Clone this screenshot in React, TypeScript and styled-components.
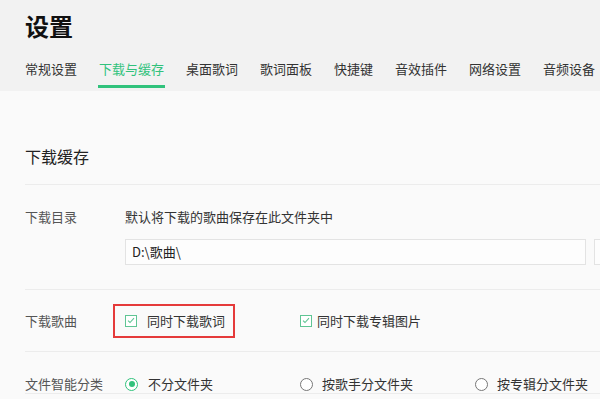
import { createGlobalStyle } from "styled-components";
import styled from "styled-components";

const GlobalStyle = createGlobalStyle`
  html, body {
    margin: 0;
    padding: 0;
    background: #fafafa;
    font-family: "Noto Sans CJK SC", "Liberation Sans", sans-serif;
    overflow: hidden;
  }
`;

const tabs = ["常规设置", "下载与缓存", "桌面歌词", "歌词面板", "快捷键", "音效插件", "网络设置", "音频设备"];

const Page = styled.div`
  width: 600px;
  height: 399px;
  background: #fafafa;
  overflow: hidden;
`;

const Header = styled.header`
  background: #f2f2f2;
  height: 91px;
  padding-left: 25px;
  box-sizing: border-box;
  display: flex;
  flex-direction: column;
`;

const Title = styled.h1`
  margin: 12px 0 0;
  font-size: 24px;
  line-height: 28px;
  font-weight: 700;
  color: #111;
`;

const TabBar = styled.nav`
  display: flex;
  gap: 22px;
  margin-top: 20px;
  white-space: nowrap;
`;

const Tab = styled.div<{ $active?: boolean }>`
  position: relative;
  font-size: 13px;
  line-height: 18px;
  color: ${(p) => (p.$active ? "#31c27c" : "#333")};
  height: 28px;
  &::after {
    content: "";
    display: ${(p) => (p.$active ? "block" : "none")};
    position: absolute;
    left: -1px;
    right: -1px;
    bottom: 0;
    height: 3px;
    background: #31c27c;
  }
`;

const Content = styled.main`
  padding-left: 25px;
`;

const SectionTitle = styled.h2`
  margin: 0;
  padding: 55px 0 18px;
  font-size: 16px;
  line-height: 20px;
  font-weight: 400;
  color: #222;
  border-bottom: 1px solid #ececec;
`;

const Row = styled.div<{ $pad?: string; $center?: boolean }>`
  display: flex;
  align-items: ${(p) => (p.$center ? "center" : "flex-start")};
  padding: ${(p) => p.$pad ?? "0"};
  min-height: ${(p) => (p.$center ? "62px" : "auto")};
  border-bottom: 1px solid #ececec;
  box-sizing: border-box;
`;

const Label = styled.div`
  width: 100px;
  flex-shrink: 0;
  font-size: 13px;
  line-height: 18px;
  color: #555;
`;

const Body = styled.div`
  flex: 1;
  font-size: 13px;
  line-height: 18px;
  color: #333;
`;

const PathRow = styled.div`
  display: flex;
  gap: 8px;
  margin-top: 13px;
`;

const Input = styled.div<{ $w: number }>`
  width: ${(p) => p.$w}px;
  flex-shrink: 0;
  height: 26px;
  box-sizing: border-box;
  border: 1px solid #e3e3e3;
  background: #fdfdfd;
  padding-left: 6px;
  font-size: 13px;
  line-height: 24px;
  color: #222;
`;

const Options = styled.div`
  display: flex;
`;

const Option = styled.label`
  width: 175px;
  display: flex;
  align-items: center;
  font-size: 13px;
  line-height: 18px;
  color: #333;
  white-space: nowrap;
`;

const Highlight = styled.span`
  position: relative;
  display: flex;
  align-items: center;
  &::after {
    content: "";
    position: absolute;
    left: -12px;
    right: -10px;
    top: -8px;
    bottom: -8px;
    border: 2px solid #e53a3a;
  }
`;

const Box = styled.span<{ $gap: number }>`
  width: 12px;
  height: 12px;
  box-sizing: border-box;
  border: 1px solid #5fc594;
  margin-right: ${(p) => p.$gap}px;
  display: flex;
  align-items: center;
  justify-content: center;
  background: #fff;
`;

const Radio = styled.span<{ $on?: boolean; $gap: number }>`
  width: 13px;
  height: 13px;
  box-sizing: border-box;
  border-radius: 50%;
  border: 1px solid ${(p) => (p.$on ? "#31c27c" : "#777")};
  margin-right: ${(p) => p.$gap}px;
  display: flex;
  align-items: center;
  justify-content: center;
  background: #fff;
  &::after {
    content: "";
    display: ${(p) => (p.$on ? "block" : "none")};
    width: 6px;
    height: 6px;
    border-radius: 50%;
    background: #31c27c;
  }
`;

const Check = () => (
  <svg width="8" height="7" viewBox="0 0 8 7">
    <path d="M1 3.6 L3 5.5 L7 1.2" fill="none" stroke="#5fc594" strokeWidth="1.1" />
  </svg>
);

export default function App() {
  return (
    <Page>
      <GlobalStyle />
      <Header>
        <Title>设置</Title>
        <TabBar>
          {tabs.map((t) => (
            <Tab key={t} $active={t === "下载与缓存"}>
              {t}
            </Tab>
          ))}
        </TabBar>
      </Header>
      <Content>
        <SectionTitle>下载缓存</SectionTitle>
        <Row $pad="23px 0 24px">
          <Label>下载目录</Label>
          <Body>
            默认将下载的歌曲保存在此文件夹中
            <PathRow>
              <Input $w={461}>D:\歌曲\</Input>
              <Input $w={60} />
            </PathRow>
          </Body>
        </Row>
        <Row $center>
          <Label>下载歌曲</Label>
          <Options>
            <Option>
              <Highlight>
                <Box $gap={10}>
                  <Check />
                </Box>
                同时下载歌词
              </Highlight>
            </Option>
            <Option>
              <Box $gap={5}>
                <Check />
              </Box>
              同时下载专辑图片
            </Option>
          </Options>
        </Row>
        <Row $pad="23px 0 0">
          <Label>文件智能分类</Label>
          <Options>
            <Option>
              <Radio $on $gap={10} />
              不分文件夹
            </Option>
            <Option>
              <Radio $gap={9} />
              按歌手分文件夹
            </Option>
            <Option>
              <Radio $gap={9} />
              按专辑分文件夹
            </Option>
          </Options>
        </Row>
      </Content>
    </Page>
  );
}
